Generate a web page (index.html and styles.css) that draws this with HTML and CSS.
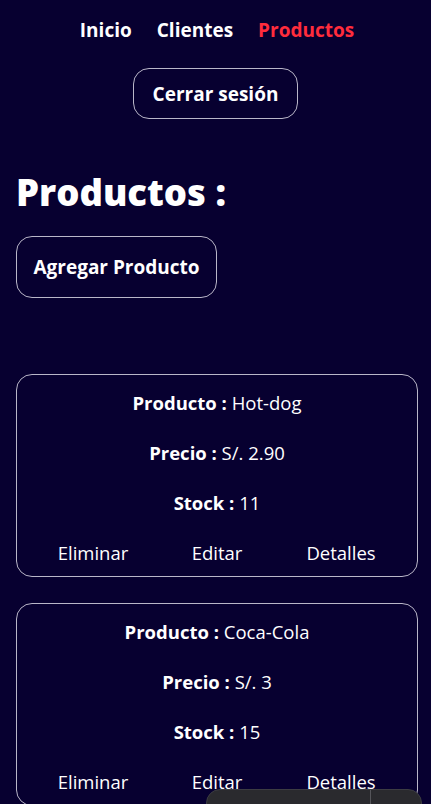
FILE: index.html
```html
<!DOCTYPE html>
<html lang="es">
<head>
<meta charset="utf-8">
<title>Productos</title>
<link rel="stylesheet" href="styles.css">
</head>
<body>
<header class="top">
  <nav class="nav">
    <a class="nav-link" href="#">Inicio</a>
    <a class="nav-link" href="#">Clientes</a>
    <a class="nav-link active" href="#">Productos</a>
  </nav>
  <button class="btn btn-logout">Cerrar sesión</button>
</header>
<main class="main">
  <h1 class="title">Productos :</h1>
  <button class="btn btn-add">Agregar Producto</button>
  <section class="list">
    <article class="card">
      <p class="row"><b>Producto :</b> Hot-dog</p>
      <p class="row"><b>Precio :</b> S/. 2.90</p>
      <p class="row"><b>Stock :</b> 11</p>
      <div class="actions">
        <a href="#">Eliminar</a>
        <a href="#">Editar</a>
        <a href="#">Detalles</a>
      </div>
    </article>
    <article class="card">
      <p class="row"><b>Producto :</b> Coca-Cola</p>
      <p class="row"><b>Precio :</b> S/. 3</p>
      <p class="row"><b>Stock :</b> 15</p>
      <div class="actions">
        <a href="#">Eliminar</a>
        <a href="#">Editar</a>
        <a href="#">Detalles</a>
      </div>
    </article>
  </section>
</main>
<div class="toast"><div class="toast-main"></div><div class="toast-side"></div></div>
</body>
</html>
```
FILE: styles.css
```css
html, body {
  margin: 0;
  padding: 0;
  background: #070030;
  color: #ffffff;
  font-family: "Open Sans", "Noto Sans", sans-serif;
}
body {
  min-height: 804px;
  overflow: hidden;
}
.top {
  display: flex;
  flex-direction: column;
  align-items: center;
  padding-top: 17px;
}
.nav {
  display: flex;
  gap: 25px;
  padding-left: 3px;
}
.nav-link {
  color: #ffffff;
  text-decoration: none;
  font-weight: 700;
  font-size: 19px;
  line-height: 26px;
}
.nav-link.active {
  color: #ff2c3c;
}
.btn {
  background: transparent;
  color: #ffffff;
  border: 1px solid #b9b6c8;
  border-radius: 16px;
  font-family: inherit;
  font-weight: 700;
  font-size: 19px;
}
.btn-logout {
  margin-top: 25px;
  width: 165px;
  height: 51px;
}
.main {
  padding: 0 13px 0 16px;
}
.title {
  margin: 51px 0 0;
  font-size: 36.5px;
  line-height: 44px;
  font-weight: 800;
}
.btn-add {
  margin-top: 22px;
  width: 201px;
  height: 62px;
}
.list {
  margin-top: 76px;
  display: flex;
  flex-direction: column;
  gap: 26px;
}
.card {
  border: 1px solid #b9b6c8;
  border-radius: 16px;
  padding: 15px 14px 10px;
  display: flex;
  flex-direction: column;
  align-items: center;
  gap: 24px;
  font-size: 18.5px;
}
.row {
  margin: 0;
  line-height: 26px;
}
.row b {
  font-weight: 700;
}
.actions {
  align-self: stretch;
  display: grid;
  grid-template-columns: repeat(3, 1fr);
  text-align: center;
  line-height: 26px;
}
.actions a {
  color: #ffffff;
  text-decoration: none;
}
.toast {
  position: fixed;
  left: 206px;
  top: 789px;
  width: 214px;
  height: 40px;
  display: flex;
  background: #2a2a2e;
  border: 1px solid #3c3c42;
  border-radius: 14px;
  overflow: hidden;
}
.toast-main {
  flex: 1;
}
.toast-side {
  width: 50px;
  border-left: 1px solid #55555a;
}
```
